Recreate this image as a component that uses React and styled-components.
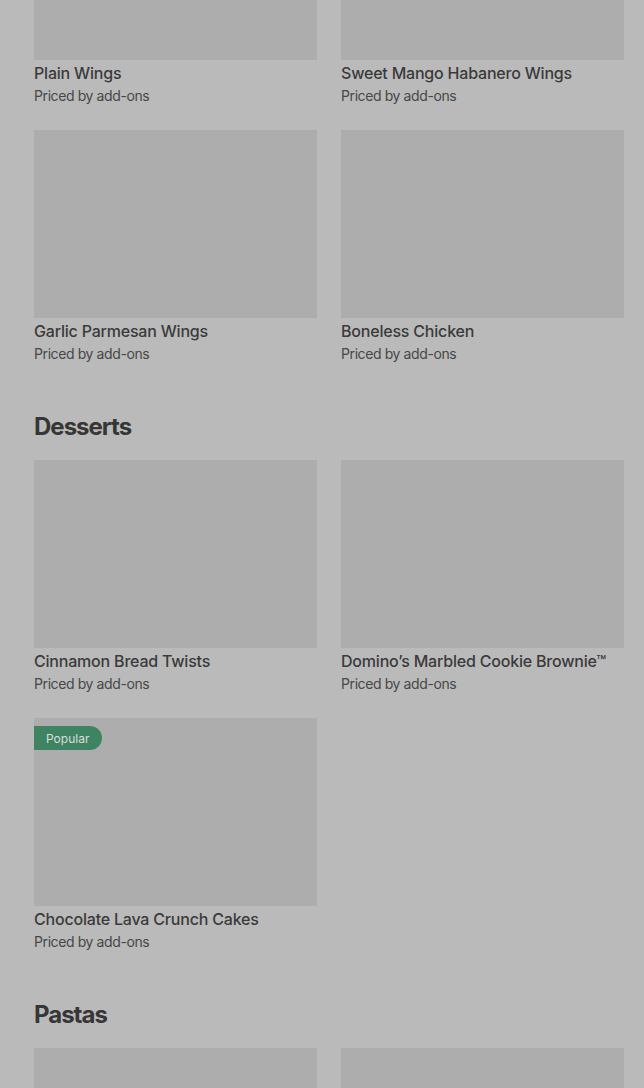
import React from 'react'
import styled, { createGlobalStyle } from 'styled-components'

const GlobalStyle = createGlobalStyle`
    html, body {
        margin: 0;
        padding: 0;
        background: #bababa;
        overflow: hidden;
    }
    body {
        font-family: Inter, "Noto Sans", Roboto, sans-serif;
        -webkit-font-smoothing: antialiased;
    }
`

const Page = styled.div`
    width: 644px;
    height: 1088px;
    overflow: hidden;
    background: #bababa;
`

// the view is scrolled, so the first image is cut off at the top
const Menu = styled.main`
    margin-top: -128px;
    padding: 0 20px 0 34px;
    display: flex;
    flex-direction: column;
`

const Section = styled.section`
    display: flex;
    flex-direction: column;
    padding-bottom: 47px;
`

const Heading = styled.h2`
    margin: 0 0 17px;
    font-size: 24px;
    line-height: 32px;
    font-weight: 700;
    letter-spacing: -1px;
    color: #363636;
`

const Grid = styled.div`
    display: grid;
    grid-template-columns: 283px 283px;
    column-gap: 24px;
    row-gap: 24px;
`

const Card = styled.div`
    display: flex;
    flex-direction: column;
`

const Thumb = styled.div`
    position: relative;
    height: 188px;
    background: #adadad;
`

const Badge = styled.span`
    position: absolute;
    top: 8px;
    left: 0;
    height: 24px;
    padding: 0 13px 0 12px;
    display: flex;
    align-items: center;
    border-radius: 0 12px 12px 0;
    background: #3f8462;
    color: #dcdcdc;
    font-size: 12px;
`

const Title = styled.div`
    margin-top: 3px;
    font-size: 16px;
    line-height: 20px;
    font-weight: 500;
    letter-spacing: -0.2px;
    color: #3a3a3a;
    white-space: nowrap;
`

const Sub = styled.div`
    margin-top: 3px;
    font-size: 14px;
    line-height: 20px;
    letter-spacing: -0.4px;
    color: #474747;
`

const sections = [
    {
        name: null,
        items: [
            { title: 'Plain Wings' },
            { title: 'Sweet Mango Habanero Wings' },
            { title: 'Garlic Parmesan Wings' },
            { title: 'Boneless Chicken' },
        ],
    },
    {
        name: 'Desserts',
        items: [
            { title: 'Cinnamon Bread Twists' },
            { title: 'Domino’s Marbled Cookie Brownie™' },
            { title: 'Chocolate Lava Crunch Cakes', popular: true },
        ],
    },
    {
        name: 'Pastas',
        items: [{}, {}],
    },
]

function Item({ title, popular }) {
    return (
        <Card>
            <Thumb>{popular && <Badge>Popular</Badge>}</Thumb>
            {title && <Title>{title}</Title>}
            {title && <Sub>Priced by add-ons</Sub>}
        </Card>
    )
}

export default function App() {
    return (
        <Page>
            <GlobalStyle />
            <Menu>
                {sections.map((s, i) => (
                    <Section key={i}>
                        {s.name && <Heading>{s.name}</Heading>}
                        <Grid>
                            {s.items.map((it, j) => (
                                <Item key={j} {...it} />
                            ))}
                        </Grid>
                    </Section>
                ))}
            </Menu>
        </Page>
    )
}
